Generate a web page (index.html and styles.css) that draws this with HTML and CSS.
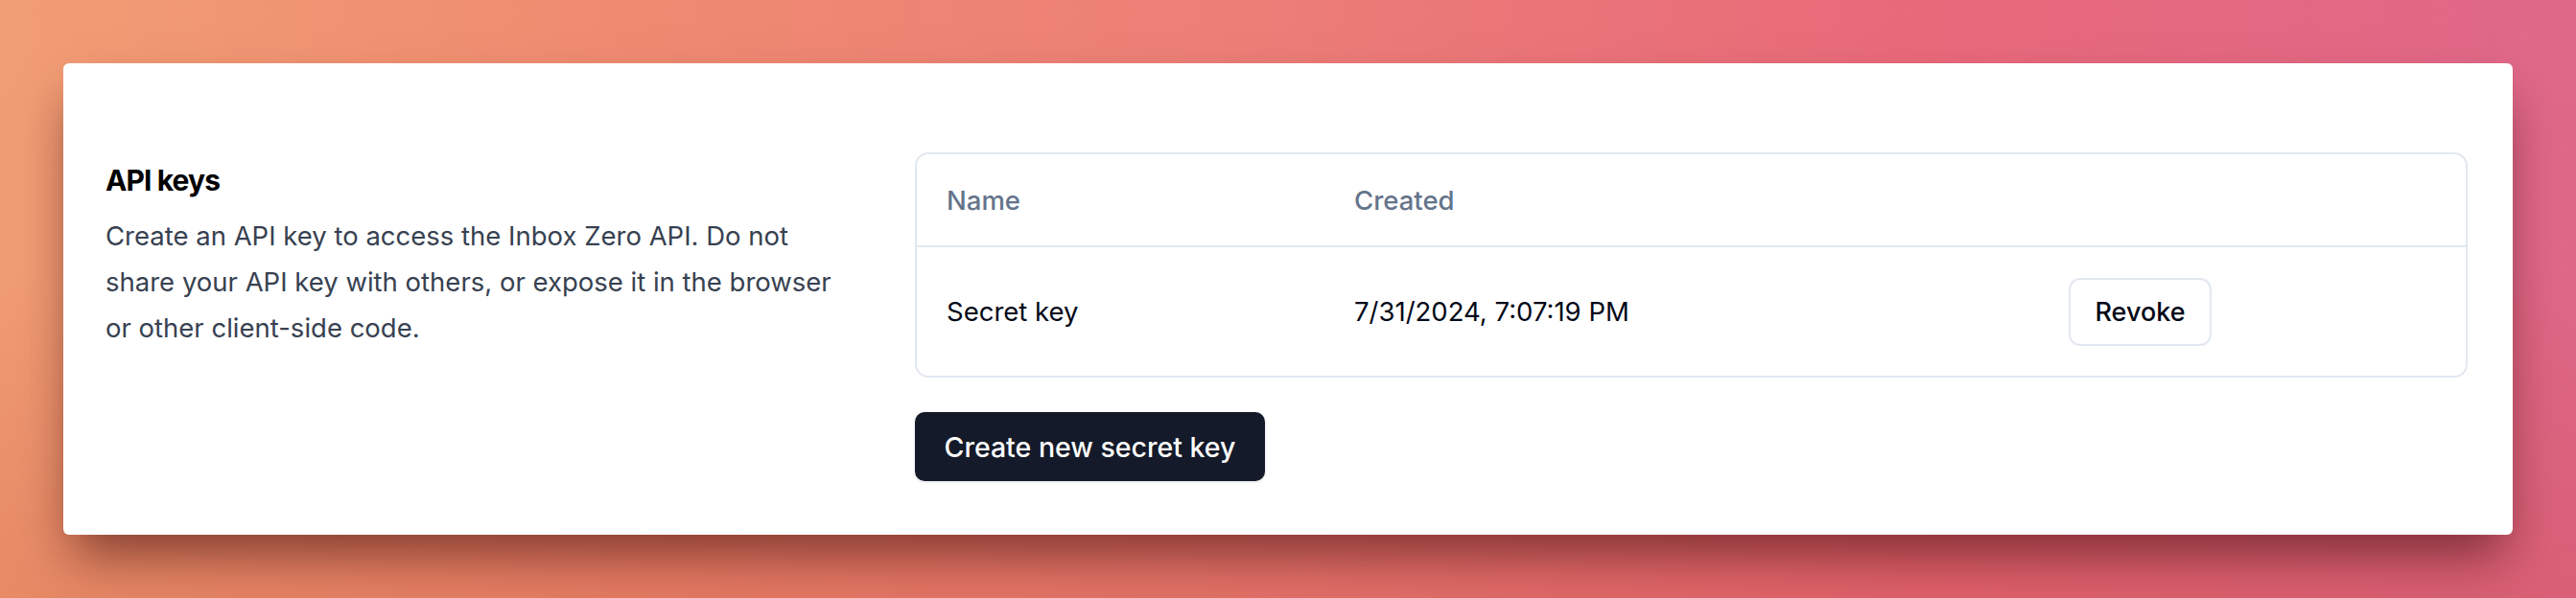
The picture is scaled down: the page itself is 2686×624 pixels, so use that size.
FILE: index.html
```html
<!DOCTYPE html>
<html lang="en">
<head>
<meta charset="utf-8">
<title>API keys</title>
<link rel="stylesheet" href="styles.css">
</head>
<body>
<div class="page">
  <section class="card">
    <div class="intro">
      <h2 class="title">API keys</h2>
      <p class="desc">Create an API key to access the Inbox Zero API. Do not share your API key with others, or expose it in the browser or other client-side code.</p>
    </div>
    <div class="main">
      <div class="table">
        <div class="row head">
          <div class="cell">Name</div>
          <div class="cell">Created</div>
          <div class="cell"></div>
        </div>
        <div class="row body">
          <div class="cell">Secret key</div>
          <div class="cell">7/31/2024, 7:07:19 PM</div>
          <div class="cell"><button class="btn-outline">Revoke</button></div>
        </div>
      </div>
      <button class="btn-primary">Create new secret key</button>
    </div>
  </section>
</div>
</body>
</html>
```

FILE: styles.css
```css
html, body {
  margin: 0;
  padding: 0;
}
body {
  width: 2686px;
  height: 624px;
  overflow: hidden;
  font-family: Inter, "Noto Sans", "Liberation Sans", sans-serif;
}
.page {
  width: 2686px;
  height: 624px;
  box-sizing: border-box;
  padding: 66px 66px 0 66px;
  background:
    linear-gradient(to bottom, rgba(0,0,0,0) 45%, rgba(190,60,40,0.2) 100%),
    linear-gradient(to right, #f19d74 0%, #ef8a71 25%, #ec7e77 48%, #e8697a 75%, #df6889 100%);
}
.card {
  background: #ffffff;
  border-radius: 6px;
  box-shadow: 0 30px 50px -10px rgba(60, 10, 10, 0.6);
  box-sizing: border-box;
  width: 2554px;
  padding: 93px 47px 56px 44px;
  display: grid;
  grid-template-columns: 780px 1fr;
  column-gap: 64px;
}
.intro {
  padding-top: 8px;
}
.title {
  margin: 0;
  font-size: 30px;
  line-height: 42px;
  font-weight: 700;
  letter-spacing: -0.9px;
  color: #000000;
}
.desc {
  margin: 13px 0 0 0;
  font-size: 27.5px;
  line-height: 48px;
  color: #374151;
}
.main {
  display: flex;
  flex-direction: column;
  align-items: flex-start;
}
.table {
  width: 100%;
  box-sizing: border-box;
  border: 2px solid #e2e8f0;
  border-radius: 14px;
  overflow: hidden;
}
.row {
  display: grid;
  grid-template-columns: 425px 745px 1fr;
  align-items: center;
}
.row.head {
  height: 95px;
  border-bottom: 2px solid #e2e8f0;
  color: #64748b;
  font-weight: 500;
}
.row.body {
  height: 134px;
  color: #020817;
}
.cell {
  padding-left: 31px;
  font-size: 27.5px;
  line-height: 36px;
}
.btn-outline {
  font-family: inherit;
  font-size: 27px;
  font-weight: 500;
  color: #020817;
  background: #ffffff;
  border: 2px solid #e2e8f0;
  border-radius: 12px;
  width: 149px;
  height: 71px;
  padding: 0;
}
.btn-primary {
  margin-top: 36px;
  font-family: inherit;
  font-size: 28.5px;
  font-weight: 500;
  color: #ffffff;
  background: #141a29;
  border: none;
  border-radius: 10px;
  height: 72px;
  width: 365px;
  padding: 0;
  box-shadow: 0 1px 3px rgba(0,0,0,0.15);
}
```
